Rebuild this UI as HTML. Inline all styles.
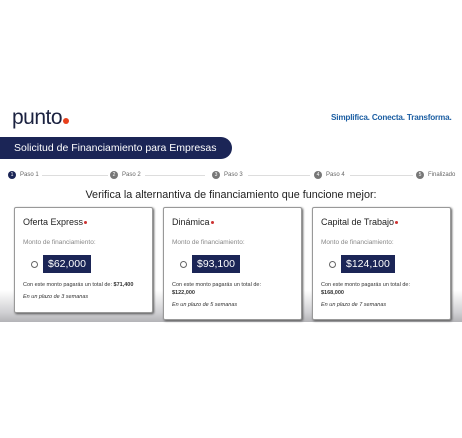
<!DOCTYPE html>
<html><head><style>
*{margin:0;padding:0;box-sizing:border-box}
body{width:462px;height:438px;background:#fff;font-family:"Liberation Sans",sans-serif;position:relative;overflow:hidden;color:#222}
.a{position:absolute}
.band{left:0;top:290px;width:462px;height:32px;background:linear-gradient(#fff,#d0d0d3 70%,#b3b3b7)}
.logo{left:12px;top:106px;font-size:21px;color:#1b2240;letter-spacing:-0.5px}
.dot{display:inline-block;width:6px;height:6px;border-radius:50%;background:#e8401c;margin-left:1px}
.tag{left:331px;top:113px;font-size:8.2px;font-weight:bold;color:#1d5fa3;white-space:nowrap;letter-spacing:-0.2px}
.ban{left:0;top:137px;width:232px;height:22px;background:#1b2556;border-radius:0 11px 11px 0;color:#fff;font-size:10.5px;padding:5px 0 0 14px}
.step{top:171px;font-size:6px;color:#666;display:flex;align-items:center;white-space:nowrap}
.c{display:inline-block;width:8px;height:8px;border-radius:50%;background:#777;margin-right:4px;color:#fff;font-size:5px;text-align:center;line-height:8px}
.line{top:175px;height:1px;background:#ddd}
.h{left:0;width:462px;top:189px;text-align:center;font-size:10.8px;color:#222}
.card{top:207px;width:139px;background:#fff;border:1px solid #999;border-radius:2px;box-shadow:1px 1px 2px #555;padding:9px 8px}
.t{font-size:9px;color:#222}
.r{display:inline-block;width:3px;height:3px;border-radius:50%;background:#c33;margin-left:1px;vertical-align:middle}
.m{font-size:6.5px;color:#888;margin-top:12px}
.row{display:flex;align-items:center;margin-top:9px;margin-left:8px}
.rad{width:7px;height:7px;border:1px solid #666;border-radius:50%;margin-right:5px}
.amt{background:#1b2556;color:#fff;font-size:10.5px;padding:3px 5px;height:18px}
.s{font-size:5.5px;color:#333;margin-top:8px;line-height:8px}
.i{font-size:5.5px;font-style:italic;color:#333;margin-top:5px}
</style></head><body>
<div class="a band"></div>
<div class="a logo">punto<span class="dot"></span></div>
<div class="a tag">Simplifica. Conecta. Transforma.</div>
<div class="a ban">Solicitud de Financiamiento para Empresas</div>
<div class="a line" style="left:42px;width:66px"></div>
<div class="a line" style="left:145px;width:60px"></div>
<div class="a line" style="left:248px;width:62px"></div>
<div class="a line" style="left:350px;width:63px"></div>
<div class="a step" style="left:8px"><span class="c" style="background:#1b2556">1</span>Paso 1</div>
<div class="a step" style="left:110px"><span class="c">2</span>Paso 2</div>
<div class="a step" style="left:212px"><span class="c">3</span>Paso 3</div>
<div class="a step" style="left:314px"><span class="c">4</span>Paso 4</div>
<div class="a step" style="left:416px"><span class="c">5</span>Finalizado</div>
<div class="a h">Verifica la alternantiva de financiamiento que funcione mejor:</div>
<div class="a card" style="left:14px;height:106px"><div class="t">Oferta Express<span class="r"></span></div><div class="m">Monto de financiamiento:</div><div class="row"><span class="rad"></span><span class="amt">$62,000</span></div><div class="s">Con este monto pagarás un total de: <b>$71,400</b></div><div class="i">En un plazo de 3 semanas</div></div>
<div class="a card" style="left:163px;height:113px"><div class="t">Dinámica<span class="r"></span></div><div class="m">Monto de financiamiento:</div><div class="row"><span class="rad"></span><span class="amt">$93,100</span></div><div class="s">Con este monto pagarás un total de:<br><b>$122,000</b></div><div class="i">En un plazo de 5 semanas</div></div>
<div class="a card" style="left:312px;height:113px"><div class="t">Capital de Trabajo<span class="r"></span></div><div class="m">Monto de financiamiento:</div><div class="row"><span class="rad"></span><span class="amt">$124,100</span></div><div class="s">Con este monto pagarás un total de:<br><b>$168,000</b></div><div class="i">En un plazo de 7 semanas</div></div>
</body></html>
